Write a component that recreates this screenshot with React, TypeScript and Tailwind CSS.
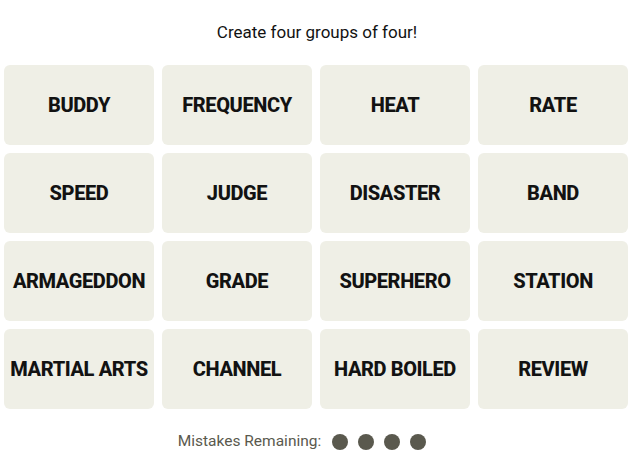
import React from "react";

const words = [
  "BUDDY", "FREQUENCY", "HEAT", "RATE",
  "SPEED", "JUDGE", "DISASTER", "BAND",
  "ARMAGEDDON", "GRADE", "SUPERHERO", "STATION",
  "MARTIAL ARTS", "CHANNEL", "HARD BOILED", "REVIEW",
];

export default function App() {
  return (
    <div className="w-[634px] h-[454px] bg-white flex flex-col items-center" style={{ fontFamily: "Roboto, 'Liberation Sans', sans-serif" }}>
      <p className="mt-[22px] h-[20px] text-[17px] leading-[20px] text-[#121212]">Create four groups of four!</p>
      <div className="mt-[23px] ml-[-2px] grid grid-cols-[repeat(4,150px)] grid-rows-[repeat(4,80px)] gap-[8px]">
        {words.map((w) => (
          <div key={w} className="bg-[#efefe6] rounded-[6px] flex items-center justify-center text-[20px] font-extrabold text-[#121212] tracking-[-0.4px] whitespace-nowrap">
            {w}
          </div>
        ))}
      </div>
      <div className="mt-[21px] ml-[-30px] flex items-center text-[#5a594e]">
        <span className="text-[15.5px] mr-[1px]">Mistakes Remaining:</span>
        {[0, 1, 2, 3].map((i) => (
          <span key={i} className="ml-[10px] w-[16px] h-[16px] rounded-full bg-[#5a594e]" />
        ))}
      </div>
    </div>
  );
}
